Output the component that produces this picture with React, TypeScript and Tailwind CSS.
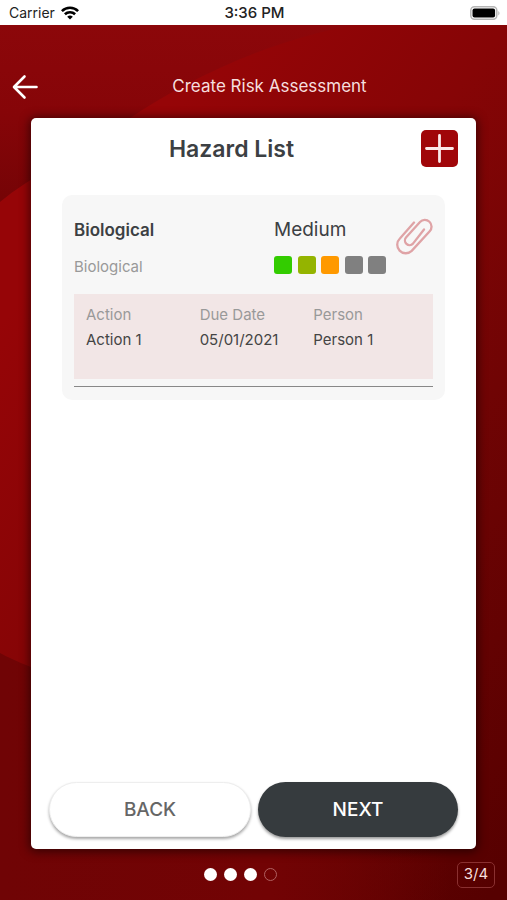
const actions = [{ action: 'Action 1', dueDate: '05/01/2021', person: 'Person 1' }];

const riskColors = ['bg-[#33cc00]', 'bg-[#94b400]', 'bg-[#ff9900]', 'bg-[#808080]', 'bg-[#808080]'];

function StatusBar() {
  return (
    <div className="grid h-[25px] grid-cols-3 items-center bg-white pl-[9px] pr-[7px] pt-px leading-[24px] text-[#222]">
      <div className="flex items-center gap-[6px] text-[14px]">
        <span>Carrier</span>
        <svg viewBox="0 0 18 14" className="h-[14px] w-[18px]" fill="none" stroke="#000" strokeWidth="2.6">
          <path d="M0.9 5.1a11.6 11.6 0 0 1 16.2 0" />
          <path d="M3.9 8.3a7.3 7.3 0 0 1 10.2 0" />
          <path d="M9 13.6 6.2 10.8a4 4 0 0 1 5.6 0z" fill="#000" stroke="none" />
        </svg>
      </div>
      <span className="text-center text-[15px] font-medium">3:36 PM</span>
      <svg viewBox="0 0 30 14" className="h-[14px] w-[30px] justify-self-end">
        <rect x="0.8" y="0.8" width="26" height="12.4" rx="3.6" fill="#fff" stroke="#b5b5b5" strokeWidth="1.5" />
        <rect x="2.5" y="2.5" width="22.6" height="9" rx="2" fill="#000" />
        <path d="M28.3 5v4.4c1.6-.8 1.6-3.6 0-4.4z" fill="#b5b5b5" />
      </svg>
    </div>
  );
}

function Backdrop() {
  return (
    <svg
      className="absolute inset-0 h-full w-full"
      viewBox="0 0 507 875"
      preserveAspectRatio="none"
      aria-hidden="true"
    >
      <defs>
        <linearGradient id="base" gradientUnits="userSpaceOnUse" x1="150" y1="100" x2="750" y2="550">
          <stop offset="0" stopColor="#960507" />
          <stop offset="0.3" stopColor="#860506" />
          <stop offset="0.58" stopColor="#700404" />
          <stop offset="0.98" stopColor="#560000" />
        </linearGradient>
        <linearGradient id="corner" x1="0" y1="0" x2="0" y2="1">
          <stop offset="0" stopColor="#8c070a" />
          <stop offset="0.5" stopColor="#860508" />
          <stop offset="1" stopColor="#750406" />
        </linearGradient>
        <linearGradient id="lower" gradientUnits="userSpaceOnUse" x1="0" y1="0" x2="450" y2="0">
          <stop offset="0" stopColor="#700405" />
          <stop offset="0.6" stopColor="#720304" />
          <stop offset="1" stopColor="#720304" stopOpacity="0" />
        </linearGradient>
      </defs>
      <rect width="507" height="875" fill="url(#base)" />
      <path d="M0 0H355C270 15 190 53 130 93S30 152 0 177z" fill="url(#corner)" />
      <path d="M0 628C40 650 160 690 450 730V875H0z" fill="url(#lower)" />
    </svg>
  );
}

function PaperclipIcon() {
  return (
    <svg
      viewBox="0 0 37 37"
      className="h-[37px] w-[37px]"
      fill="none"
      stroke="#dfa3a6"
      strokeWidth="2.3"
      strokeLinecap="round"
    >
      <path d="M18 4.5 3.9 20.5a8 8 0 0 0 11.8 12.4L33.7 13.2a6.6 6.6 0 0 0-9.7-9.2L10.2 19.3a4.6 4.6 0 0 0 6.8 6.3L28 11.500" />
    </svg>
  );
}

function HazardCard() {
  return (
    <article className="rounded-[10px] bg-[#f7f7f7] px-3 pb-[13px] pt-[23px]">
      <div className="flex">
        <div className="flex-1 leading-[24px]">
          <h3 className="text-[17px] font-semibold text-[#3c4043]">Biological</h3>
          <p className="mt-[13px] text-[15px] text-[#999]">Biological</p>
        </div>
        <div className="w-[122px]">
          <p className="text-[19px] leading-[24px] text-[#3c4043]">Medium</p>
          <div className="mt-[14px] flex w-[112px] justify-between">
            {riskColors.map((color, i) => (
              <span key={i} className={`size-[18px] rounded-[3px] ${color}`} />
            ))}
          </div>
        </div>
        <button type="button" aria-label="Attachments" className="self-start">
          <PaperclipIcon />
        </button>
      </div>

      <div className="mt-[15px] h-[85px] bg-[#f2e6e6] pl-3 pr-[6px] pt-2">
        <table className="w-full table-fixed text-left text-[15px] leading-[25px]">
          <thead>
            <tr className="text-[#999]">
              <th className="font-normal">Action</th>
              <th className="font-normal">Due Date</th>
              <th className="font-normal">Person</th>
            </tr>
          </thead>
          <tbody className="text-[#444]">
            {actions.map((row) => (
              <tr key={row.action}>
                <td>{row.action}</td>
                <td>{row.dueDate}</td>
                <td>{row.person}</td>
              </tr>
            ))}
          </tbody>
        </table>
      </div>
      <hr className="mt-[7px] border-[#888]" />
    </article>
  );
}

export default function App() {
  return (
    <div className="flex min-h-screen flex-col font-['Inter',sans-serif]">
      <StatusBar />
      <div className="relative flex flex-1 flex-col">
        <Backdrop />

        <header className="relative flex h-[93px] items-center pl-3 pr-[7px] pt-[30px]">
          <button type="button" aria-label="Go back">
            <svg
              viewBox="0 0 27 26"
              className="h-[26px] w-[27px]"
              fill="none"
              stroke="#fff"
              strokeWidth="2.6"
              strokeLinecap="round"
              strokeLinejoin="round"
            >
              <path d="M24.5 13H2.5M12.5 2.5 2 13l10.5 10.5" />
            </svg>
          </button>
          <h1 className="flex-1 pb-[2px] text-center text-[17px] leading-[24px] text-[#f6dede]">
            Create Risk Assessment
          </h1>
        </header>

        <main className="relative mx-[31px] flex flex-1 flex-col rounded-[5px] bg-white pb-3 pt-3 shadow-[0_1px_10px_2px_rgba(0,0,0,0.5)]">
          <div className="flex gap-[7px] px-[18px]">
            <h2 className="flex-1 text-center text-[23px] font-semibold leading-[38px] text-[#3c4043]">Hazard List</h2>
            <button type="button" aria-label="Add hazard" className="size-[37px] rounded-[5px] bg-[#a00609]">
              <svg viewBox="0 0 37 37" className="size-[37px]" stroke="#fbe9e9" strokeWidth="2.8" strokeLinecap="round">
                <path d="M18.5 5.5v26M5.5 18.5h26" />
              </svg>
            </button>
          </div>

          <div className="flex-1 px-[31px] pt-[27px]">
            <HazardCard />
          </div>

          <div className="flex gap-[7px] px-[18px] text-[19px] font-medium leading-[28px]">
            <button
              type="button"
              className="h-[55px] flex-1 rounded-full border border-[#eee] bg-white pt-px text-[#666] shadow-[0_2px_3px_rgba(0,0,0,0.35)]"
            >
              BACK
            </button>
            <button
              type="button"
              className="h-[55px] flex-1 rounded-full bg-[#363b3e] pt-px text-white shadow-[0_2px_3px_rgba(0,0,0,0.4)]"
            >
              NEXT
            </button>
          </div>
        </main>

        <footer className="relative grid h-[51px] grid-cols-[1fr_auto_1fr] items-center px-3">
          <div className="col-start-2 mr-[26px] flex gap-[7px]">
            <span className="size-[13px] rounded-full bg-white" />
            <span className="size-[13px] rounded-full bg-white" />
            <span className="size-[13px] rounded-full bg-white" />
            <span className="size-[13px] rounded-full border border-[#b06060]" />
          </div>
          <span className="flex h-[26px] w-[38px] items-center justify-center justify-self-end rounded-[5px] border border-[#8a3030] text-[15px] text-[#f6dede]">
            3/4
          </span>
        </footer>
      </div>
    </div>
  );
}
